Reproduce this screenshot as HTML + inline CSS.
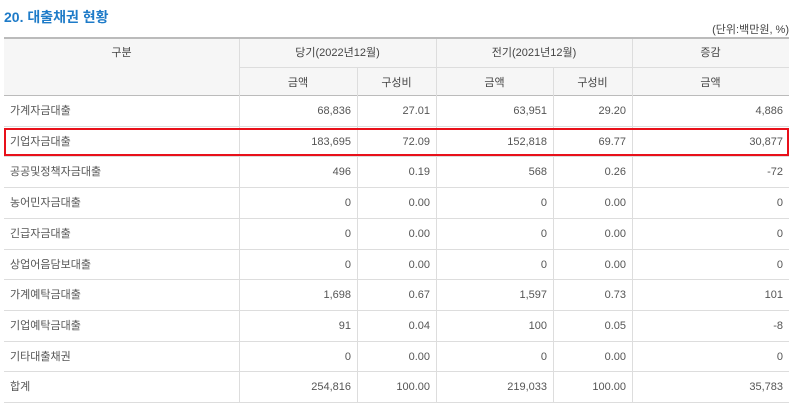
<!DOCTYPE html>
<html><head><meta charset="utf-8"><style>
*{margin:0;padding:0;box-sizing:border-box}
body{width:800px;height:409px;background:#fff;position:relative;overflow:hidden;font-family:"Liberation Sans","Noto Sans CJK KR",sans-serif;font-size:11px;line-height:13px;color:#555}
.a{position:absolute}
.t{left:4px;top:9px;font-size:14px;line-height:16px;color:#1e7bc8;font-weight:bold}
.u{right:11px;top:24px;font-size:11px;color:#444}
.hd{background:#f6f6f6}
.hl{background:#ddd;height:1px}
.vl{background:#ddd;width:1px}
.c{text-align:center;color:#444}
.r{text-align:right}
</style></head><body>
<div class="a t">20. 대출채권 현황</div>
<div class="a u">(단위:백만원, %)</div>
<div class="a hd" style="left:4px;top:37px;width:785px;height:59px"></div>
<div class="a" style="left:4px;top:37px;width:785px;height:2px;background:#bbb"></div>
<div class="a" style="left:4px;top:95px;width:785px;height:1px;background:#bbb"></div>
<div class="a hl" style="left:239px;top:67px;width:550px"></div>
<div class="a vl" style="left:239px;top:39px;height:364px"></div>
<div class="a vl" style="left:436px;top:39px;height:364px"></div>
<div class="a vl" style="left:632px;top:39px;height:364px"></div>
<div class="a vl" style="left:357px;top:67px;height:336px"></div>
<div class="a vl" style="left:553px;top:67px;height:336px"></div>
<div class="a c" style="left:4px;top:47px;width:235px">구분</div>
<div class="a c" style="left:239px;top:47px;width:197px">당기(2022년12월)</div>
<div class="a c" style="left:436px;top:47px;width:196px">전기(2021년12월)</div>
<div class="a c" style="left:632px;top:47px;width:157px">증감</div>
<div class="a c" style="left:239px;top:77px;width:118px">금액</div>
<div class="a c" style="left:357px;top:77px;width:79px">구성비</div>
<div class="a c" style="left:436px;top:77px;width:117px">금액</div>
<div class="a c" style="left:553px;top:77px;width:79px">구성비</div>
<div class="a c" style="left:632px;top:77px;width:157px">금액</div>
<div id="rows"></div>
<div class="a" style="left:4px;top:128px;width:785px;height:28px;border:2px solid #e8101a"></div>
<script>
var d=[["가계자금대출","68,836","27.01","63,951","29.20","4,886"],
["기업자금대출","183,695","72.09","152,818","69.77","30,877"],
["공공및정책자금대출","496","0.19","568","0.26","-72"],
["농어민자금대출","0","0.00","0","0.00","0"],
["긴급자금대출","0","0.00","0","0.00","0"],
["상업어음담보대출","0","0.00","0","0.00","0"],
["가계예탁금대출","1,698","0.67","1,597","0.73","101"],
["기업예탁금대출","91","0.04","100","0.05","-8"],
["기타대출채권","0","0.00","0","0.00","0"],
["합계","254,816","100.00","219,033","100.00","35,783"]];
var rg=[357,436,553,632,789],h="";
for(var i=0;i<10;i++){var y=96+i*30.7;
h+='<div class="a hl" style="left:4px;top:'+(y+30.7-1).toFixed(1)+'px;width:785px"></div>';
h+='<div class="a" style="left:10px;top:'+(y+9).toFixed(1)+'px">'+d[i][0]+'</div>';
for(var j=0;j<5;j++)h+='<div class="a r" style="left:0;width:'+(rg[j]-6)+'px;top:'+(y+9).toFixed(1)+'px">'+d[i][j+1]+'</div>';}
document.getElementById("rows").innerHTML=h;
</script>
</body></html>
